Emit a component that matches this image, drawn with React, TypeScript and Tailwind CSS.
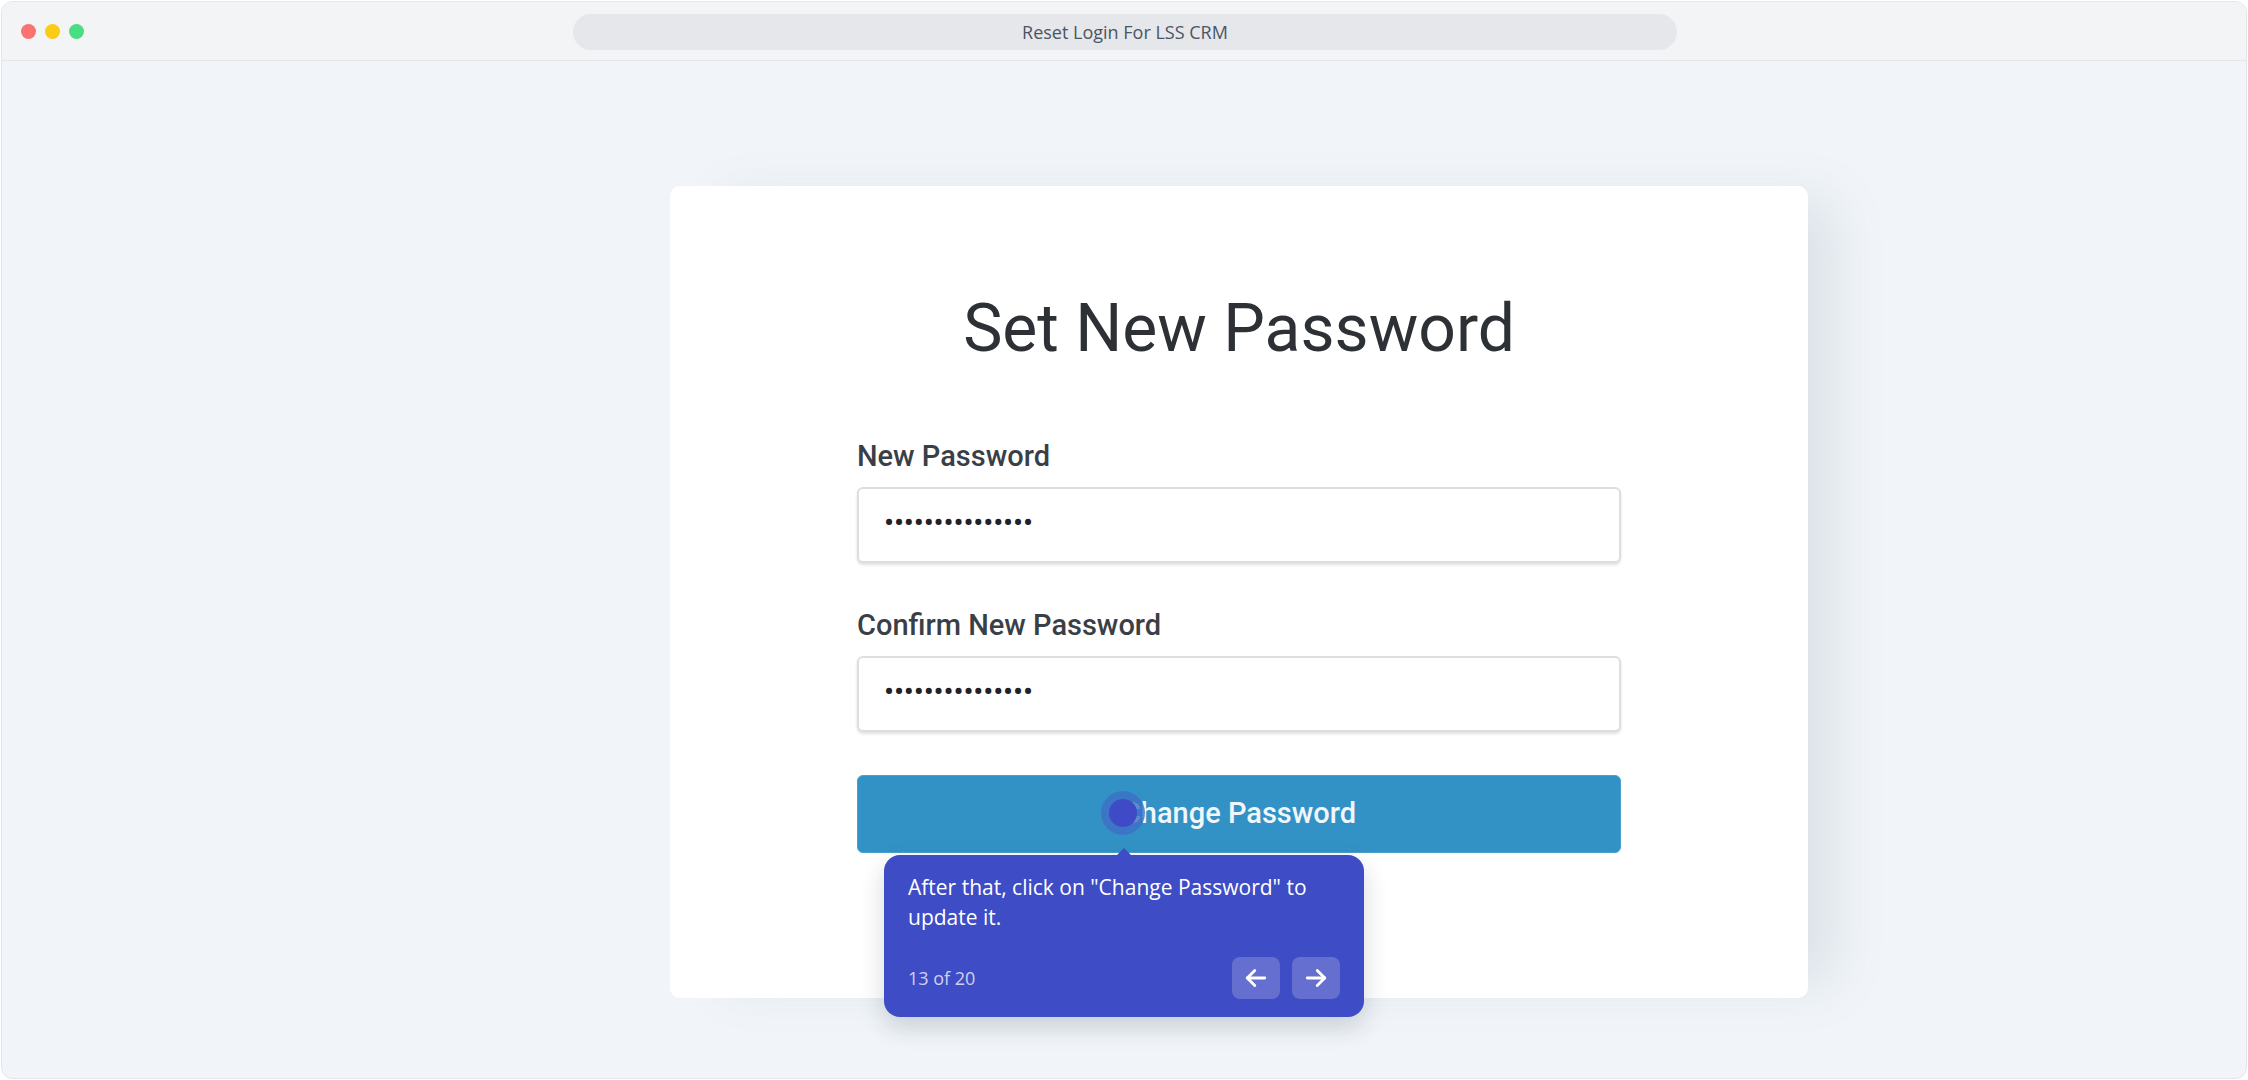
import React from "react";

const roboto = { fontFamily: "Roboto, 'Liberation Sans', sans-serif" } as const;

function PasswordField() {
  return (
    <div className="mt-[15px] h-[76px] w-full rounded-[6px] border-2 border-[#dcdee0] bg-white shadow-[0_2px_3px_rgba(0,0,0,0.12)] flex items-center pl-[25px]">
      <span className="text-[30px] leading-none tracking-[-0.2px] text-[#1f2226] font-['Roboto',sans-serif] -mt-[4px]">
        •••••••••••••••
      </span>
    </div>
  );
}

function ArrowLeft() {
  return (
    <svg width="30" height="30" viewBox="0 0 24 24" fill="none" stroke="white" strokeWidth="2.3" strokeLinecap="round" strokeLinejoin="round">
      <path d="M19 12H5" />
      <path d="M11 18l-6-6 6-6" />
    </svg>
  );
}

function ArrowRight() {
  return (
    <svg width="30" height="30" viewBox="0 0 24 24" fill="none" stroke="white" strokeWidth="2.3" strokeLinecap="round" strokeLinejoin="round">
      <path d="M5 12h14" />
      <path d="M13 6l6 6-6 6" />
    </svg>
  );
}

export default function App() {
  return (
    <div className="w-[2248px] h-[1080px] bg-white p-px">
      <div className="h-full w-full rounded-[12px] border border-[#e3e5e9] overflow-hidden flex flex-col bg-[#f1f5f9]">
        {/* title bar */}
        <div className="h-[59px] shrink-0 bg-[#f3f4f6] border-b border-[#e3e5e9] flex items-center relative">
          <div className="flex items-center gap-[9px] pl-[19px]">
            <div className="w-[15px] h-[15px] rounded-full bg-[#fb7272]" />
            <div className="w-[15px] h-[15px] rounded-full bg-[#facc15]" />
            <div className="w-[15px] h-[15px] rounded-full bg-[#4ade80]" />
          </div>
          <div className="absolute left-[571px] top-[12px] w-[1104px] h-[36px] rounded-full bg-[#e5e7eb] flex items-center justify-center">
            <span className="text-[18px] text-[#4b5563] font-['Open_Sans',sans-serif]">Reset Login For LSS CRM</span>
          </div>
        </div>

        {/* content */}
        <div className="flex-1 pl-[668px] pt-[125px]">
          <div
            className="relative w-[1138px] h-[812px] rounded-[10px] bg-white shadow-[40px_0_50px_-16px_rgba(100,116,139,0.16)] flex flex-col items-center pt-[110px]"
            style={roboto}
          >
            <h1 className="text-[66px] leading-none font-normal text-[#2d3136] h-[66px]">Set New Password</h1>

            <div className="w-[764px] flex flex-col">
              <label className="mt-[78px] text-[29px] leading-[32px] font-medium text-[#3a3f47]">New Password</label>
              <PasswordField />
              <label className="mt-[46px] text-[29px] leading-[32px] font-medium text-[#3a3f47]">Confirm New Password</label>
              <PasswordField />
              <button className="mt-[43px] h-[78px] w-full rounded-[6px] bg-[#3392c5] border border-[#4aa0cf] text-[29px] font-medium text-[#f1f6fa]">
                Change Password
              </button>
            </div>

            {/* hotspot */}
            <div className="absolute left-[431px] top-[605px] w-[44px] h-[44px] rounded-full bg-[#3d6fc6]/80 flex items-center justify-center">
              <div className="w-[28px] h-[28px] rounded-full bg-[#3f4bc6]" />
            </div>

            {/* tooltip */}
            <div className="absolute left-[214px] top-[669px] w-[480px] h-[162px] rounded-[16px] bg-[#3e4cc5] shadow-[0_10px_24px_rgba(30,41,59,0.18)] px-[24px] pt-[17px] pb-[18px] flex flex-col justify-between font-['Open_Sans',sans-serif]">
              <div className="absolute left-[233px] -top-[7px] w-0 h-0 border-l-[7px] border-r-[7px] border-b-[7px] border-l-transparent border-r-transparent border-b-[#3e4cc5]" />
              <p className="text-[21px] leading-[30px] text-white">
                After that, click on "Change Password" to update it.
              </p>
              <div className="flex items-center justify-between">
                <span className="text-[18px] text-white/75">13 of 20</span>
                <div className="flex gap-[12px]">
                  <button className="w-[48px] h-[42px] rounded-[8px] bg-white/20 flex items-center justify-center">
                    <ArrowLeft />
                  </button>
                  <button className="w-[48px] h-[42px] rounded-[8px] bg-white/20 flex items-center justify-center">
                    <ArrowRight />
                  </button>
                </div>
              </div>
            </div>
          </div>
        </div>
      </div>
    </div>
  );
}
